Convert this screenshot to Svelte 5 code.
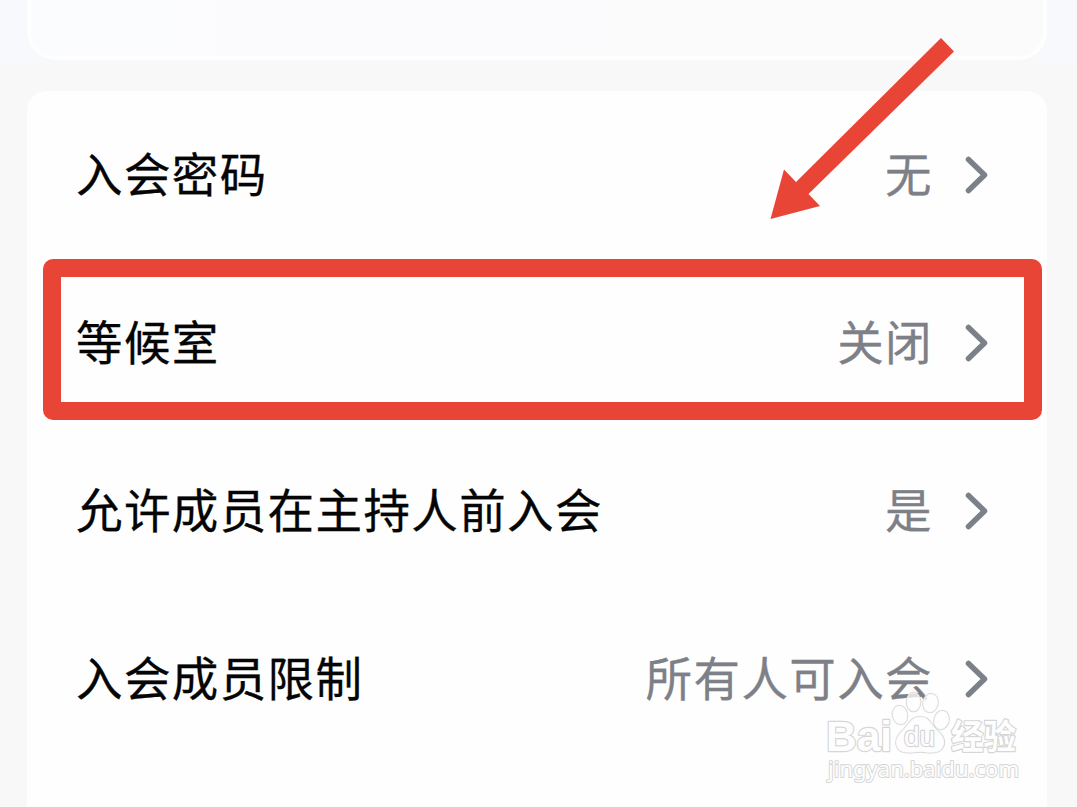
<script lang="ts">
	const settings = [
		{ label: '入会密码', value: '无' },
		{ label: '等候室', value: '关闭' },
		{ label: '允许成员在主持人前入会', value: '是' },
		{ label: '入会成员限制', value: '所有人可入会' }
	];
</script>

<main class="page">
	<section class="previous-card"></section>

	<section class="card">
		{#each settings as item}
			<div class="row">
				<span class="label">{item.label}</span>
				<span class="value">{item.value}</span>
				<svg class="chevron" width="26" height="38" viewBox="0 0 26 38">
					<path d="M4.5 3.5 L20.5 19 L4.5 34.5" />
				</svg>
			</div>
		{/each}
	</section>

	<div class="highlight"></div>

	<svg class="arrow" width="190" height="190" viewBox="767 35 190 190">
		<path d="M941 38 L954 51.5 L808.5 194 L820 206 L770.5 219 L784 169.5 L796 182 Z" />
	</svg>

	<svg class="watermark" width="210" height="100" viewBox="820 690 210 100">
		<text class="brand" x="826" y="751" textLength="66" lengthAdjust="spacingAndGlyphs">Bai</text>
		<g class="paw">
			<ellipse cx="900" cy="715" rx="7.5" ry="9.5" transform="rotate(-12 900 715)" />
			<ellipse cx="913.5" cy="702" rx="7" ry="9.5" />
			<ellipse cx="930.5" cy="703" rx="7.5" ry="9.5" transform="rotate(12 930.5 703)" />
			<ellipse cx="941.5" cy="720" rx="7.5" ry="9.5" transform="rotate(15 941.5 720)" />
			<path d="M920 716.5 C911 716.5 909 724 903 730 C896 736 894 743 898 749 C903 755 912 752 920 752 C928 752 937 755 942 749 C947 742 943 735 937 730 C931 724 929 716.5 920 716.5 Z" />
		</g>
		<text class="du" x="904" y="746" textLength="31" lengthAdjust="spacingAndGlyphs">du</text>
		<text class="cn" x="951" y="749" textLength="65" lengthAdjust="spacingAndGlyphs">经验</text>
		<text class="site" x="828" y="777" textLength="191" lengthAdjust="spacingAndGlyphs">jingyan.baidu.com</text>
	</svg>
</main>

<style>
	:global(body) {
		margin: 0;
		background: #f8f8f8;
	}

	.page {
		position: relative;
		display: flex;
		flex-direction: column;
		gap: 31px;
		box-sizing: border-box;
		height: 807px;
		padding: 0 30px 0 27px;
		overflow: hidden;
		background: linear-gradient(#f7f9fd 64px, #f8f8f8 64px);
		font-family: 'Noto Sans CJK SC', sans-serif;
	}

	.previous-card {
		flex: none;
		box-sizing: border-box;
		height: 60px;
		border: 4px solid #fefefe;
		border-top: 0;
		border-radius: 0 0 28px 28px;
		background: linear-gradient(90deg, #fbfcfe, #fbfbfc);
		box-shadow: 0 4px 0 #f8f8f9;
	}

	.card {
		flex: 1;
		border-radius: 20px 20px 0 0;
		background: #fefefe;
	}

	.row {
		display: flex;
		align-items: center;
		box-sizing: border-box;
		height: 168px;
		padding: 0 57px 1px 49px;
		font-size: 46.5px;
		line-height: 68px;
		letter-spacing: 1.4px;
		white-space: nowrap;
	}

	.label,
	.value {
		padding-bottom: 5px;
	}

	.label {
		flex: 1;
		color: #050505;
		-webkit-text-stroke: 0.3px #050505;
	}

	.value {
		margin-right: 31px;
		color: #7e8088;
		-webkit-text-stroke: 0.3px #7e8088;
	}

	.chevron {
		flex: none;
	}

	.chevron path {
		fill: none;
		stroke: #7c8089;
		stroke-width: 5.5;
		stroke-linecap: round;
		stroke-linejoin: round;
	}

	.highlight {
		position: absolute;
		top: 259px;
		left: 43px;
		box-sizing: border-box;
		width: 999px;
		height: 161px;
		border: 18px solid #e94537;
		border-radius: 10px;
	}

	.arrow {
		position: absolute;
		top: 35px;
		left: 767px;
		fill: #e94537;
	}

	.watermark {
		position: absolute;
		top: 690px;
		left: 820px;
		fill: #fefefe;
		stroke: #d6d6d6;
		stroke-width: 2.4;
		stroke-linejoin: round;
		paint-order: stroke;
	}

	.brand {
		font: bold 42px 'Liberation Sans', sans-serif;
	}

	.paw {
		fill-opacity: 0.75;
		stroke-width: 1.5;
	}

	.du {
		font: 27px 'Liberation Sans', sans-serif;
	}

	.cn {
		font: bold 34px 'Noto Sans CJK SC', sans-serif;
	}

	.site {
		font: 22px 'Noto Sans', sans-serif;
		stroke-width: 2;
	}
</style>
